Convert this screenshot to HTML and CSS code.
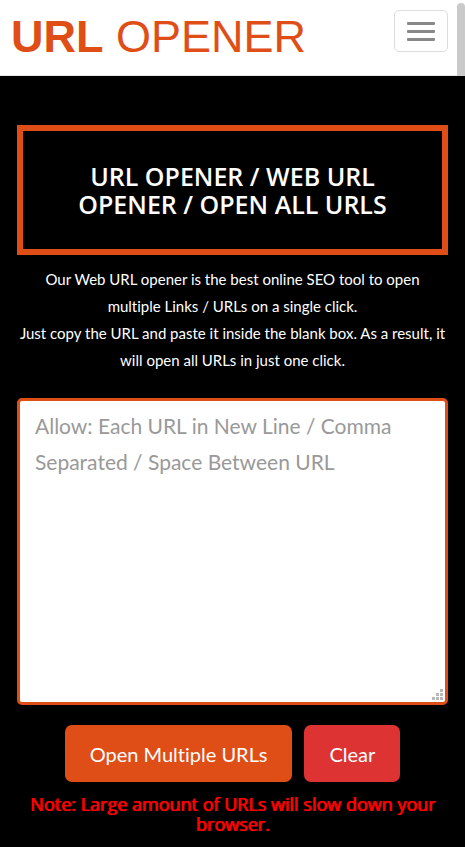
FILE: index.html
```html
<!DOCTYPE html>
<html lang="en">
<head>
<meta charset="utf-8">
<meta name="viewport" content="width=device-width, initial-scale=1">
<title>URL Opener</title>
<link rel="stylesheet" href="styles.css">
</head>
<body>
<header class="navbar">
  <a class="brand" href="#"><strong>URL</strong> OPENER</a>
  <button class="menu-toggle" type="button" aria-label="Toggle navigation">
    <span class="bar"></span>
    <span class="bar"></span>
    <span class="bar"></span>
  </button>
  <span class="scroll-thumb"></span>
</header>
<main class="content">
  <h1 class="title">URL OPENER / WEB URL OPENER / OPEN ALL URLS</h1>
  <p class="intro">Our Web URL opener is the best online SEO tool to open multiple Links / URLs on a single click.<br>Just copy the URL and paste it inside the blank box. As a result, it will open all URLs in just one click.</p>
  <form class="opener">
    <div class="field">
      <textarea class="urls" aria-label="URLs to open" placeholder="Allow: Each URL in New Line / Comma Separated / Space Between URL"></textarea>
      <svg class="grip" viewBox="0 0 11 11" aria-hidden="true">
        <path d="M8 0h3v3h-3zM4 4h3v3h-3zM8 4h3v3h-3zM0 8h3v3h-3zM4 8h3v3h-3zM8 8h3v3h-3z"/>
      </svg>
    </div>
    <div class="actions">
      <button class="btn btn-open" type="button">Open Multiple URLs</button>
      <button class="btn btn-clear" type="reset">Clear</button>
    </div>
  </form>
  <p class="note">Note: Large amount of URLs will slow down your browser.</p>
</main>
</body>
</html>
```
FILE: styles.css
```css
* {
  box-sizing: border-box;
}

body {
  margin: 0;
  background: #000;
  color: #fff;
  font-family: Lato, "Open Sans", sans-serif;
  font-variant-ligatures: none;
}

.navbar {
  position: relative;
  display: flex;
  justify-content: space-between;
  align-items: flex-start;
  height: 76px;
  padding: 10px 17px 0 11px;
  background: #fff;
  border-bottom: 1px solid #e7e7e7;
}

.brand {
  color: #df4e17;
  font: 45px/54px "Liberation Sans", Arial, sans-serif;
  text-decoration: none;
  white-space: nowrap;
}

.menu-toggle {
  display: flex;
  flex-direction: column;
  justify-content: center;
  gap: 5px;
  width: 54px;
  height: 42px;
  padding: 0 12px;
  background: #fff;
  border: 1px solid #ddd;
  border-radius: 5px;
}

.bar {
  height: 3px;
  background: #888;
  border-radius: 1px;
}

.scroll-thumb {
  position: absolute;
  top: 3px;
  right: 0;
  bottom: -1px;
  width: 8px;
  background: #cacaca;
  border-radius: 4px 4px 0 0;
}

.content {
  padding: 49px 17px 0;
  text-align: center;
}

.title {
  margin: 0;
  padding: 31px 40px;
  border: 6px solid #df4e17;
  font: 600 25px/28px "Open Sans", sans-serif;
}

.intro {
  margin: 11px 0 24px;
  font-size: 15px;
  line-height: 27px;
}

.field {
  position: relative;
}

.urls {
  display: block;
  width: 100%;
  height: 307px;
  padding: 7px 15px;
  background: #fff;
  border: 3px solid #df4e17;
  border-radius: 5px;
  color: #555;
  font: 21px/36px Lato, sans-serif;
  resize: none;
}

.urls::placeholder {
  color: #999;
}

.grip {
  position: absolute;
  right: 5px;
  bottom: 5px;
  width: 11px;
  height: 11px;
  fill: #b8b8b8;
}

.actions {
  display: flex;
  justify-content: center;
  gap: 12px;
  margin-top: 20px;
}

.btn {
  height: 57px;
  padding: 0 25px;
  border: 0;
  border-radius: 7px;
  color: #fff;
  font: 20px/28px Lato, sans-serif;
  font-variant-ligatures: none;
}

.btn-open {
  background: #df4e17;
}

.btn-clear {
  background: #dd3333;
}

.note {
  margin: 12px 0 0;
  color: #f00;
  font: 400 18px/20px "Open Sans", sans-serif;
  text-shadow: 1px 0 #f00;
}
```
